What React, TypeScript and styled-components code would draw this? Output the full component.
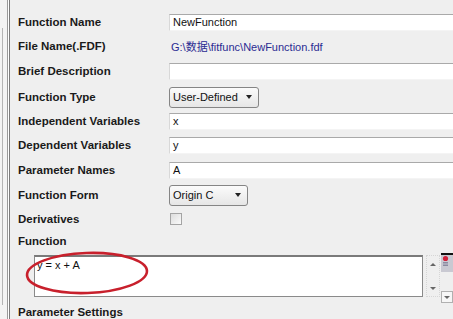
import React from 'react'
import styled, { createGlobalStyle } from 'styled-components'

const Global = createGlobalStyle`
  html, body {
    margin: 0;
    padding: 0;
    background: #efefef;
    overflow: hidden;
  }
  body {
    font-family: 'Liberation Sans', Arial, sans-serif;
  }
`

const Screen = styled.div`
  display: flex;
  width: 453px;
  height: 319px;
  background: #efefef;
  overflow: hidden;
`

const Sidebar = styled.div`
  width: 8px;
  flex: none;
  background: #f3f3f3;
  border-right: 1px solid #9a9a9a;
  display: flex;
  padding-top: 28px;
  padding-bottom: 14px;
  box-sizing: border-box;
`

const SideGroove = styled.div`
  margin-left: 2px;
  width: 1px;
  background: #b4b4b4;
`

const Divider = styled.div`
  width: 2px;
  flex: none;
  border-left: 1px solid #ffffff;
  border-right: 1px solid #7c7c7c;
  box-sizing: border-box;
`

const Form = styled.div`
  flex: 1;
  padding: 10px 0 0 8px;
  display: flex;
  flex-direction: column;
  min-width: 0;
`

const Row = styled.div<{ $h: number }>`
  display: grid;
  grid-template-columns: 151px 1fr;
  align-items: center;
  flex: none;
  height: ${p => p.$h}px;
`

const Label = styled.div`
  font-weight: bold;
  font-size: 11.5px;
  color: #1a1a1a;
  white-space: nowrap;
`

const TextBox = styled.div`
  height: 17px;
  box-sizing: border-box;
  background: #ffffff;
  border-top: 1px solid #a9a9a9;
  border-left: 1px solid #d8d8d8;
  border-bottom: 1px solid #f4f4f4;
  padding: 0 0 0 3px;
  font-size: 11px;
  line-height: 15px;
  color: #111;
  margin-right: -20px;
`

const PathText = styled.div`
  font-size: 11px;
  color: #2b2b92;
  padding-left: 2px;
  white-space: nowrap;
  font-family: 'Liberation Sans', 'Noto Sans CJK SC', sans-serif;
`

const Select = styled.div<{ $w: number }>`
  width: ${p => p.$w}px;
  height: 21px;
  box-sizing: border-box;
  border: 1px solid #858585;
  border-radius: 3px;
  background: linear-gradient(#fbfbfb, #e6e6e6);
  display: flex;
  align-items: center;
  justify-content: space-between;
  padding: 0 6px 0 3px;
  font-size: 11px;
  color: #111;
`

const Caret = styled.span`
  width: 0;
  height: 0;
  border-left: 3.5px solid transparent;
  border-right: 3.5px solid transparent;
  border-top: 4px solid #222;
`

const Check = styled.div`
  width: 12px;
  height: 12px;
  margin-left: 1px;
  box-sizing: border-box;
  border: 1px solid #a4a4a4;
  background: linear-gradient(135deg, #dcdcdc, #fafafa);
`

const EditorRow = styled.div`
  display: flex;
  align-items: stretch;
  flex: none;
  height: 42px;
  margin-top: 3px;
  position: relative;
`

const Editor = styled.div`
  margin-left: 16px;
  width: 390px;
  box-sizing: border-box;
  border: 1px solid #8a8a8a;
  border-top: 2px solid #7a7a7a;
  background: #ffffff;
  font-size: 11px;
  color: #111;
  padding: 2px 2px;
`

const Spinner = styled.div`
  width: 14px;
  margin-left: 3px;
  border: 1px dotted #d6d6d6;
  display: flex;
  flex-direction: column;
  justify-content: space-between;
  align-items: center;
  padding: 7px 0 6px;
  box-sizing: border-box;
`

const Arrow = styled.span<{ $up?: boolean }>`
  width: 0;
  height: 0;
  border-left: 3px solid transparent;
  border-right: 3px solid transparent;
  ${p => (p.$up ? 'border-bottom: 3px solid #666;' : 'border-top: 3px solid #666;')}
`

const SideTools = styled.div`
  margin-left: 1px;
  width: 12px;
  display: flex;
  flex-direction: column;
  justify-content: space-between;
  margin-top: -2px;
  margin-bottom: -6px;
`

const ToolIcon = styled.div`
  height: 17px;
  background: #c9c9d2;
  border-top: 2px solid #111;
  display: flex;
  align-items: flex-start;
  padding-left: 1px;
`

const DropBtn = styled.div`
  height: 10px;
  width: 10px;
  border: 1px solid #b0b0b0;
  background: #f6f6f6;
  display: flex;
  align-items: center;
  justify-content: center;
`

const Circle = styled.svg`
  position: absolute;
  left: 5px;
  top: -6px;
  pointer-events: none;
`

export default function App() {
  return (
    <Screen>
      <Global />
      <Sidebar>
        <SideGroove />
      </Sidebar>
      <Divider />
      <Form>
        <Row $h={24}>
          <Label>Function Name</Label>
          <TextBox>NewFunction</TextBox>
        </Row>
        <Row $h={24}>
          <Label>File Name(.FDF)</Label>
          <PathText>G:\数据\fitfunc\NewFunction.fdf</PathText>
        </Row>
        <Row $h={26}>
          <Label>Brief Description</Label>
          <TextBox />
        </Row>
        <Row $h={26}>
          <Label>Function Type</Label>
          <Select $w={90}>
            User-Defined <Caret />
          </Select>
        </Row>
        <Row $h={22}>
          <Label>Independent Variables</Label>
          <TextBox>x</TextBox>
        </Row>
        <Row $h={26}>
          <Label>Dependent Variables</Label>
          <TextBox>y</TextBox>
        </Row>
        <Row $h={24}>
          <Label>Parameter Names</Label>
          <TextBox>A</TextBox>
        </Row>
        <Row $h={26}>
          <Label>Function Form</Label>
          <Select $w={79}>
            Origin C <Caret />
          </Select>
        </Row>
        <Row $h={22}>
          <Label>Derivatives</Label>
          <Check />
        </Row>
        <Row $h={22}>
          <Label>Function</Label>
        </Row>
        <EditorRow>
          <Editor>y = x + A</Editor>
          <Spinner>
            <Arrow $up />
            <Arrow />
          </Spinner>
          <SideTools>
            <ToolIcon>
              <svg width="7" height="12" viewBox="0 0 7 12">
                <circle cx="3.5" cy="3.5" r="2.6" fill="#d3203a" />
                <rect x="1" y="7" width="5" height="1.5" fill="#8a8aa0" />
                <rect x="1" y="9.5" width="5" height="1.5" fill="#8a8aa0" />
              </svg>
            </ToolIcon>
            <DropBtn>
              <Arrow />
            </DropBtn>
          </SideTools>
          <Circle width="130" height="48" viewBox="0 0 130 48">
            <ellipse
              cx="64"
              cy="24"
              rx="60"
              ry="20"
              fill="none"
              stroke="#c8202c"
              strokeWidth="2.6"
              transform="rotate(-2 64 24)"
            />
          </Circle>
        </EditorRow>
        <Row $h={30}>
          <Label>Parameter Settings</Label>
        </Row>
      </Form>
    </Screen>
  )
}
